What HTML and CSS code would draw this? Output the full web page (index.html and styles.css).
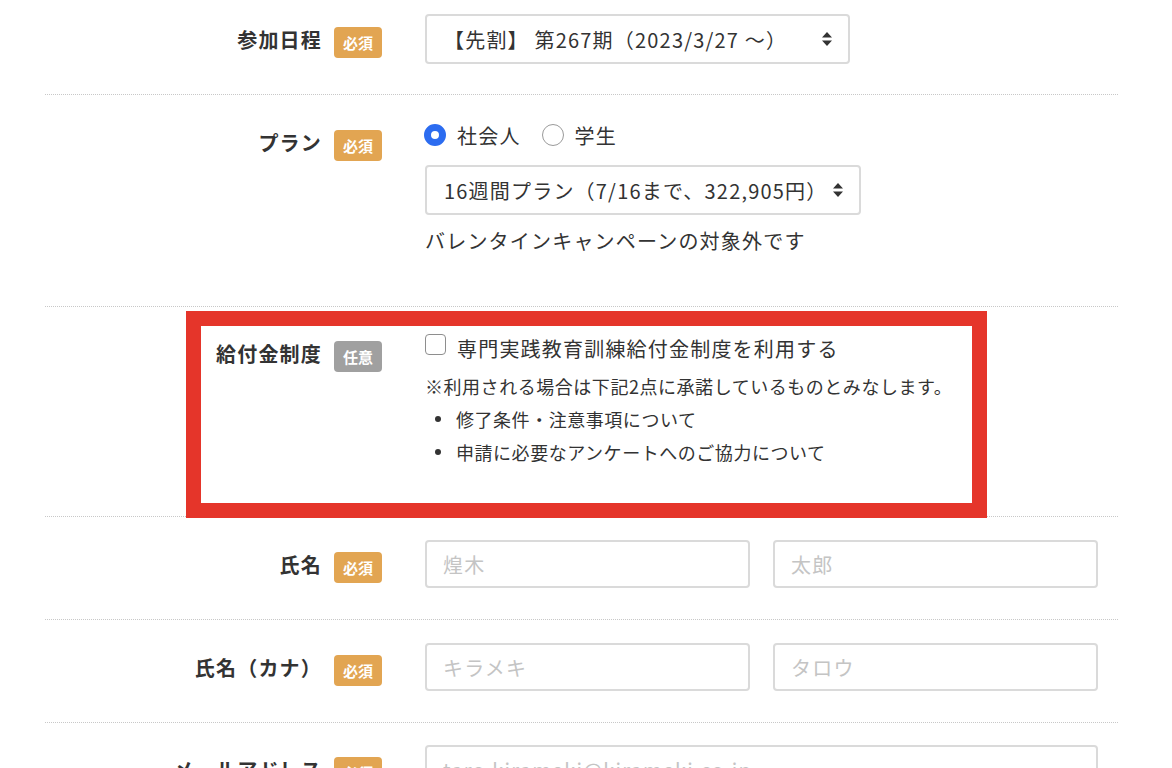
FILE: index.html
```html
<!DOCTYPE html>
<html lang="ja">
<head>
  <meta charset="UTF-8">
  <meta name="viewport" content="width=device-width, initial-scale=1.0">
  <title>お申し込みフォーム</title>
  <link rel="stylesheet" href="styles.css">
</head>
<body>
  <div class="form">
    <div class="row first">
      <div class="label"><span>参加日程</span><span class="badge req">必須</span></div>
      <div class="field">
        <div class="select w-date">
          <span>【先割】 第267期（2023/3/27 〜）</span>
          <svg class="arrows" width="10" height="14" viewBox="0 0 10 14"><path d="M5 0L10 5.5H0Z M5 14L0 8.5H10Z" fill="#333"/></svg>
        </div>
      </div>
    </div>

    <div class="row">
      <div class="label"><span>プラン</span><span class="badge req">必須</span></div>
      <div class="field">
        <div class="radios">
          <label class="radio"><span class="dot on"></span>社会人</label>
          <label class="radio"><span class="dot"></span>学生</label>
        </div>
        <div class="select w-plan">
          <span>16週間プラン（7/16まで、322,905円）</span>
          <svg class="arrows" width="10" height="14" viewBox="0 0 10 14"><path d="M5 0L10 5.5H0Z M5 14L0 8.5H10Z" fill="#333"/></svg>
        </div>
        <p class="plan-note">バレンタインキャンペーンの対象外です</p>
      </div>
    </div>

    <div class="row marked">
      <div class="label"><span>給付金制度</span><span class="badge opt">任意</span></div>
      <div class="field">
        <label class="check"><span class="box"></span>専門実践教育訓練給付金制度を利用する</label>
        <p class="small">※利用される場合は下記2点に承諾しているものとみなします。</p>
        <ul class="points">
          <li>修了条件・注意事項について</li>
          <li>申請に必要なアンケートへのご協力について</li>
        </ul>
      </div>
      <div class="highlight"></div>
    </div>

    <div class="row pair-row">
      <div class="label"><span>氏名</span><span class="badge req">必須</span></div>
      <div class="field pair">
        <input type="text" placeholder="煌木">
        <input type="text" placeholder="太郎">
      </div>
    </div>

    <div class="row pair-row">
      <div class="label"><span>氏名（カナ）</span><span class="badge req">必須</span></div>
      <div class="field pair">
        <input type="text" placeholder="キラメキ">
        <input type="text" placeholder="タロウ">
      </div>
    </div>

    <div class="row last">
      <div class="label"><span>メールアドレス</span><span class="badge req">必須</span></div>
      <div class="field">
        <input type="text" class="wide" placeholder="taro.kirameki@kirameki.co.jp">
      </div>
    </div>
  </div>
</body>
</html>
```

FILE: styles.css
```css
body {
  font-family: "Noto Sans CJK JP", "Noto Sans", sans-serif;
  color: #333;
  background-color: #fff;
  margin: 0;
  padding: 0;
  height: 768px;
  overflow: hidden;
}
.form {
  width: 1073px;
  margin-left: 45px;
}
.row {
  position: relative;
  display: grid;
  grid-template-columns: 337px 1fr;
  column-gap: 43px;
  padding: 23px 0 30px;
  border-bottom: 1px dotted #c8c8c8;
}
.row.first {
  padding-top: 14px;
}
.row.marked {
  padding-top: 22px;
}
.row.pair-row {
  padding-bottom: 31px;
}
.row.last {
  padding-top: 22px;
}
.label {
  height: 48px;
  display: flex;
  align-items: center;
  justify-content: flex-end;
  gap: 12px;
  font-size: 20px;
  font-weight: bold;
  letter-spacing: 0.06em;
}
.row.first .label {
  height: 50px;
}
.badge {
  width: 48px;
  height: 31px;
  margin-top: 6px;
  border-radius: 4px;
  color: #fff;
  font-size: 15px;
  font-weight: bold;
  letter-spacing: 0;
  display: flex;
  align-items: center;
  justify-content: center;
}
.badge.req { background-color: #e2a552; }
.badge.opt { background-color: #a0a0a0; }
.field {
  font-size: 20px;
  letter-spacing: 0.06em;
}
.select {
  box-sizing: border-box;
  height: 50px;
  border: 2px solid #dadada;
  border-radius: 4px;
  padding: 0 16px 0 17px;
  display: flex;
  align-items: center;
  justify-content: space-between;
}
.w-date { width: 425px; }
.w-plan { width: 436px; }
.arrows { flex-shrink: 0; }
.radios {
  display: flex;
  align-items: center;
  gap: 21px;
  height: 34px;
  margin-left: -1px;
  margin-bottom: 13px;
}
.radio {
  display: flex;
  align-items: center;
  gap: 11px;
}
.dot {
  box-sizing: border-box;
  width: 22px;
  height: 22px;
  border-radius: 50%;
  border: 1px solid #9a9a9a;
}
.dot.on {
  border: 7px solid #2c6cf0;
  background-color: #fff;
}
.plan-note {
  margin: 11px 0 20px;
  line-height: 30px;
}
.check {
  display: flex;
  align-items: center;
  gap: 11px;
  height: 40px;
  margin-top: -1px;
}
.box {
  box-sizing: border-box;
  width: 21px;
  height: 21px;
  margin-top: -7px;
  border: 1px solid #8e8e8e;
  border-radius: 4px;
}
.small {
  margin: 3px 0 0;
  font-size: 18px;
  letter-spacing: 0.03em;
  line-height: 30px;
}
.points {
  list-style: none;
  margin: 1px 0 18px;
  padding: 0;
  font-size: 18px;
  letter-spacing: 0.03em;
}
.points li {
  display: flex;
  align-items: center;
  height: 33px;
}
.points li::before {
  content: "";
  width: 6px;
  height: 6px;
  border-radius: 50%;
  background-color: #333;
  margin: 0 15px 0 10px;
}
.highlight {
  position: absolute;
  top: 4px;
  bottom: -2px;
  left: 141px;
  width: 801px;
  box-sizing: border-box;
  border: 15px solid #e5352a;
  pointer-events: none;
}
.pair {
  display: flex;
  gap: 23px;
}
input {
  box-sizing: border-box;
  width: 325px;
  height: 48px;
  border: 2px solid #dadada;
  border-radius: 4px;
  padding: 0 16px;
  font-family: "Noto Sans CJK JP", "Noto Sans", sans-serif;
  font-size: 20px;
  letter-spacing: 0.06em;
  color: #333;
}
input::placeholder {
  color: #c4c4c4;
}
input.wide {
  width: 673px;
}
```
